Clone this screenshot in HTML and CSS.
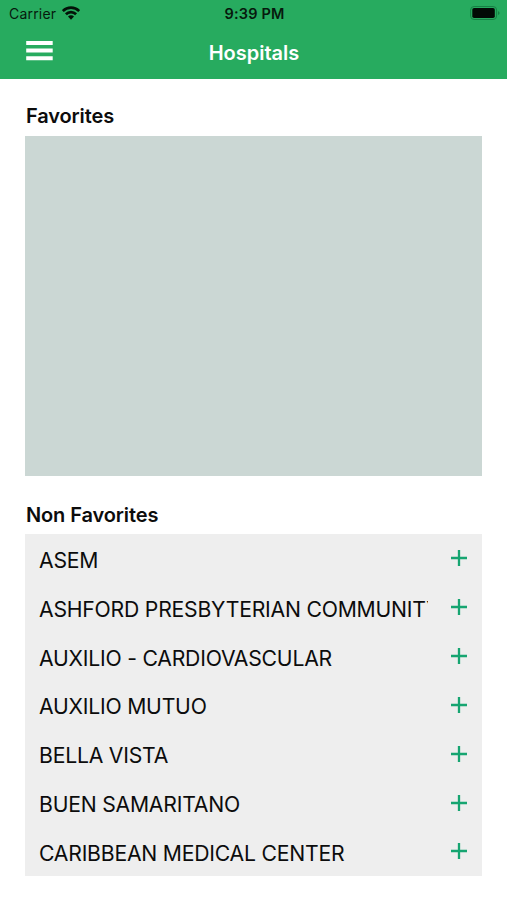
FILE: index.html
```
<!DOCTYPE html>
<html lang="en">
<head>
<meta charset="utf-8">
<title>Hospitals</title>
<link rel="stylesheet" href="styles.css">
</head>
<body>
<header class="header">
  <div class="status">
    <div class="carrier"><span>Carrier</span>
      <svg class="wifi" width="18" height="14" viewBox="0 0 18 14"><g fill="none" stroke="#031208" stroke-width="2.7"><path d="M.8 5.1a11.6 11.6 0 0 1 16.4 0"/><path d="M3.9 8.3a7.2 7.2 0 0 1 10.2 0"/></g><path d="M9 13.8 6 10.6a4.2 4.2 0 0 1 6 0z" fill="#031208"/></svg>
    </div>
    <div class="time">9:39 PM</div>
    <svg class="battery" width="30" height="14" viewBox="0 0 30 14"><rect x=".6" y=".5" width="26" height="13" rx="3.5" fill="none" stroke="#168044"/><rect x="2.3" y="2" width="22.5" height="10" rx="1.8" fill="#020a05"/><path d="M28 4.9q1.6 .7 1.6 2.1t-1.6 2.1z" fill="#168044"/></svg>
  </div>
  <div class="navbar">
    <svg class="menu" width="27" height="20" viewBox="0 0 27 20"><path d="M.2 2h26.5M.2 9.6h26.5M.2 17.2h26.5" stroke="#fff" stroke-width="4"/></svg>
    <h1 class="title">Hospitals</h1>
  </div>
</header>
<main class="main">
  <h2 class="heading">Favorites</h2>
  <div class="favorites"></div>
  <h2 class="heading second">Non Favorites</h2>
  <ul class="list">
    <li><span class="name">ASEM</span><svg class="plus" viewBox="0 0 16 16"><path d="M8 0v16M0 8h16"/></svg></li>
    <li><span class="name long">ASHFORD PRESBYTERIAN COMMUNITY</span><svg class="plus" viewBox="0 0 16 16"><path d="M8 0v16M0 8h16"/></svg></li>
    <li><span class="name">AUXILIO - CARDIOVASCULAR</span><svg class="plus" viewBox="0 0 16 16"><path d="M8 0v16M0 8h16"/></svg></li>
    <li><span class="name">AUXILIO MUTUO</span><svg class="plus" viewBox="0 0 16 16"><path d="M8 0v16M0 8h16"/></svg></li>
    <li><span class="name">BELLA VISTA</span><svg class="plus" viewBox="0 0 16 16"><path d="M8 0v16M0 8h16"/></svg></li>
    <li><span class="name">BUEN SAMARITANO</span><svg class="plus" viewBox="0 0 16 16"><path d="M8 0v16M0 8h16"/></svg></li>
    <li><span class="name">CARIBBEAN MEDICAL CENTER</span><svg class="plus" viewBox="0 0 16 16"><path d="M8 0v16M0 8h16"/></svg></li>
  </ul>
</main>
</body>
</html>
```
FILE: styles.css
```
* { box-sizing: border-box; }
body { margin: 0; background: #fff; color: #0c0c0c; font-family: Inter, "Liberation Sans", sans-serif; }
.header { height: 79px; background: #27ab5f; }
.status { height: 27px; display: grid; grid-template-columns: 1fr auto 1fr; align-items: center; padding: 0 7px 0 9px; color: #06190d; font-size: 14px; }
.carrier { display: flex; align-items: center; gap: 5.5px; letter-spacing: .2px; }
.wifi { margin-top: -2px; }
.time { font-weight: 600; font-size: 14.5px; letter-spacing: .15px; }
.battery { justify-self: end; margin-top: -1px; }
.navbar { height: 52px; display: grid; grid-template-columns: 53px 1fr 53px; align-items: center; }
.menu { margin: -4px 0 0 26px; }
.title { margin: 0; padding-left: 1px; text-align: center; color: #fff; font-size: 20px; font-weight: 600; line-height: 50px; letter-spacing: 0; }
.main { padding: 25px 24.7px 0 25.3px; }
.heading { margin: 0; height: 32px; padding-left: .6px; font-size: 20px; font-weight: 600; line-height: 25px; letter-spacing: -.1px; }
.favorites { height: 340px; background: #cbd7d4; }
.second { margin-top: 27px; height: 31px; }
.list { list-style: none; margin: 0; padding: 1.4px 0 0; height: 342px; background: #eee; }
.list li { height: 48.85px; display: flex; align-items: center; justify-content: space-between; padding: 0 15.5px 0 13.7px; }
.name { width: 388.7px; overflow: hidden; white-space: nowrap; font-size: 21.2px; line-height: 30px; letter-spacing: -.22px; }
.long { width: 389px; margin-right: -.3px; letter-spacing: -.215px; }
.plus { width: 16px; height: 16px; margin-top: -3px; fill: none; stroke: #16a571; stroke-width: 2.3; }
```
